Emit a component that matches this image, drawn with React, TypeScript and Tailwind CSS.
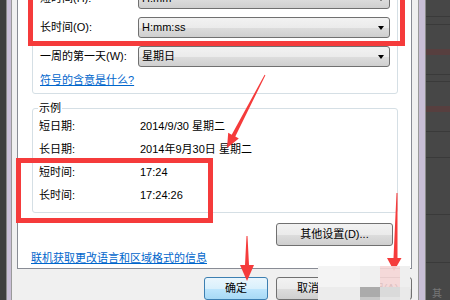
import React from "react";

const font = { fontFamily: '"Liberation Sans", "Noto Sans CJK SC", sans-serif' };

function Combo({ value }: { value: string }) {
  return (
    <div className="flex h-[21px] w-[252px] items-center justify-between rounded-[3px] border border-[#707070] bg-[linear-gradient(#f2f2f2_0%,#ebebeb_50%,#dddddd_51%,#cfcfcf_100%)] pl-[3px] pr-[5px]">
      <span>{value}</span>
      <span className="h-0 w-0 border-x-[3.5px] border-t-[4px] border-x-transparent border-t-black" />
    </div>
  );
}

function FormatRow({ label, value }: { label: string; value: string }) {
  return (
    <div className="flex h-[21px] items-center justify-between">
      <span>{label}</span>
      <Combo value={value} />
    </div>
  );
}

function SampleRow({ label, value }: { label: string; value: string }) {
  return (
    <div className="flex h-[23px] items-center">
      <span className="w-[101px]">{label}</span>
      <span>{value}</span>
    </div>
  );
}

function Button({ children, focused, className }: { children: React.ReactNode; focused?: boolean; className?: string }) {
  return (
    <div
      className={
        "flex h-[23px] items-center justify-center rounded-[3px] border " +
        (focused
          ? "border-[#3c7fb1] bg-[linear-gradient(#eaf6fd_0%,#d9f0fc_50%,#bee6fd_51%,#a7d9f5_100%)] "
          : "border-[#707070] bg-[linear-gradient(#f2f2f2_0%,#ebebeb_50%,#dddddd_51%,#cfcfcf_100%)] ") +
        (className ?? "")
      }
    >
      {children}
    </div>
  );
}

export default function App() {
  return (
    <div className="relative flex h-[300px] w-[450px] overflow-hidden text-[11px] text-black" style={font}>
      {/* left desktop + frame */}
      <div className="w-[6px] bg-[#3e3e3e]" />
      <div className="w-[6px] border-l border-l-[#8a8a8a] border-r border-r-[#9a9a9a] bg-[#c9bfd7]" />

      {/* dialog */}
      <div className="flex w-[406px] flex-col bg-[#f0f0f0] pl-[5px] pr-[6px]">
        <div className="flex h-[276px] flex-col overflow-hidden border-x border-b border-[#898c95] bg-white">
          <div className="-mt-[20px] ml-[14px] mr-[13px] flex flex-col rounded-[3px] border border-[#d5dfe5] px-[7px] pt-[7px] pb-[6px]">
            <div className="flex flex-col gap-[8px]">
              <FormatRow label="短时间(H):" value="H:mm" />
              <FormatRow label="长时间(O):" value="H:mm:ss" />
              <FormatRow label="一周的第一天(W):" value="星期日" />
            </div>
            <a className="mt-[6px] h-[14px] leading-[14px] text-[#0066cc] underline">符号的含意是什么?</a>
          </div>

          <fieldset className="mt-[7px] ml-[14px] mr-[13px] rounded-[3px] border border-[#d5dfe5] px-[6px] pb-[5px]">
            <legend className="ml-[-1px] px-[1px] leading-[14px]">示例</legend>
            <SampleRow label="短日期:" value="2014/9/30 星期二" />
            <SampleRow label="长日期:" value="2014年9月30日 星期二" />
            <SampleRow label="短时间:" value="17:24" />
            <SampleRow label="长时间:" value="17:24:26" />
          </fieldset>

          <div className="mt-[10px] mr-[18px] flex justify-end">
            <Button className="w-[117px]">其他设置(D)...</Button>
          </div>
          <a className="mt-[5px] ml-[13px] leading-[14px] text-[#0066cc] underline">联机获取更改语言和区域格式的信息</a>
        </div>

        <div className="mt-[8px] flex justify-end gap-[8px]">
          <Button focused className="w-[64px]">确定</Button>
          <Button className="w-[64px]">取消</Button>
          <Button className="w-[64px]">应用(A)</Button>
        </div>
      </div>

      {/* right frame + desktop */}
      <div className="w-[8px] border-l border-l-[#9a9a9a] border-r border-r-[#8a8a8a] bg-[#c9bfd7]" />
      <div className="flex w-[24px] flex-col bg-[#474747]">
        <div className="h-[17px] border-b border-[#3a3a3a]" />
        <div className="h-[8px] border-b border-[#3a3a3a]" />
        <div className="h-[24px]" />
        <div className="h-[6px] bg-[#573f3f]" />
        <div className="h-[20px] border-b border-[#3a3a3a]" />
        <div className="h-[7px] border-b border-[#3a3a3a]" />
        <div className="h-[24px]" />
        <div className="h-[6px] bg-[#573f3f]" />
        <div className="h-[20px] border-b border-[#3a3a3a]" />
        <div className="h-[26px] border-b border-[#3a3a3a]" />
        <div className="h-[57px] border-b border-[#3a3a3a]" />
        <div className="h-[48px] border-b border-[#3a3a3a]" />
        <div className="flex-1" />
        <div className="pl-[6px] text-[10px] leading-[12px] text-[#777]">其</div>
      </div>

      {/* annotations */}
      <div className="absolute left-[28px] top-[-10px] h-[56px] w-[377px] border-[5px] border-[#f53b3b]" />
      <div className="absolute left-[16px] top-[158px] h-[65px] w-[197px] border-[5px] border-[#f53b3b]" />
      <svg className="pointer-events-none absolute left-0 top-0" width="450" height="300">
        <polygon fill="#f53b3b" points="265.4,75.2 235.3,136.5 238.8,138.4 227,148 228.2,132.8 231.7,134.7 264.6,74.8" />
        <polygon fill="#f53b3b" points="246.5,236 247.5,236 249,265 254,265 247,281 240,265 245,265" />
        <polygon fill="#f53b3b" points="396.5,193 397.5,193 397.5,258 401.5,258 394,271 387,258 393.5,258" />
      </svg>

      {/* watermark */}
      <div className="absolute left-[318px] top-[266px] grid h-[34px] w-[92px] grid-cols-[42px_20px_20px_10px] grid-rows-[21px_10px_3px]">
        <div className="bg-[#f4f4f4]" />
        <div className="bg-[#f0f0f0]" />
        <div className="bg-[#f5d6d6]/90" />
        <div className="bg-[#efefef]" />
        <div className="bg-[#ececec]" />
        <div className="bg-[#ababab]" />
        <div className="bg-[#dadada]" />
        <div className="bg-[#eaeaea]" />
        <div className="bg-[#ececec]" />
        <div className="bg-[#c8c8c8]" />
        <div className="bg-[#e4e4e4]" />
        <div className="bg-[#eaeaea]" />
      </div>
    </div>
  );
}
